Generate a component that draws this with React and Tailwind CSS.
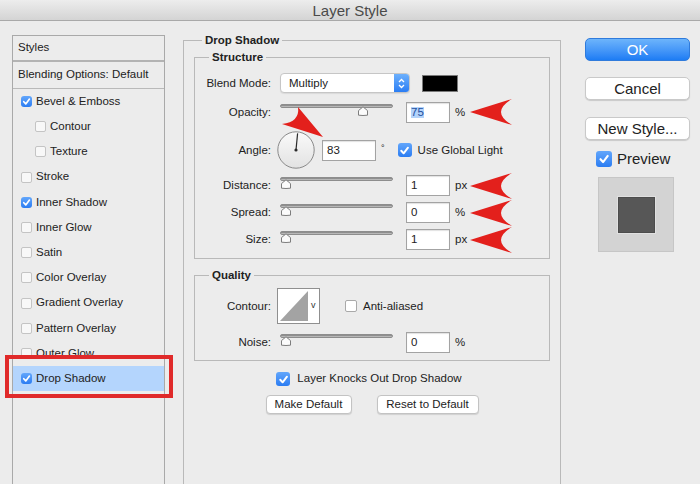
import React from "react";

function CheckMark({ s = 11 }) {
  return (
    <svg width={s} height={s} viewBox="0 0 12 12" className="block">
      <polyline points="3,6.2 5.2,8.6 9.2,3.4" fill="none" stroke="white" strokeWidth="1.8" strokeLinecap="round" strokeLinejoin="round" />
    </svg>
  );
}

function SmallBox({ checked }) {
  if (checked)
    return (
      <div className="w-[11px] h-[11px] rounded-[3px] bg-gradient-to-b from-[#62a6fb] to-[#2a7cf2] flex items-center justify-center shrink-0">
        <CheckMark s={11} />
      </div>
    );
  return <div className="w-[11px] h-[11px] rounded-[2px] bg-[#f8f8f8] border border-[#c4c4c4] shrink-0" />;
}

function MedBox({ checked }) {
  if (checked)
    return (
      <div className="w-[14px] h-[14px] rounded-[3px] bg-gradient-to-b from-[#62a6fb] to-[#2a7cf2] flex items-center justify-center shrink-0">
        <CheckMark s={13} />
      </div>
    );
  return <div className="w-[12px] h-[12px] rounded-[2px] bg-white border border-[#a9a9a9] shrink-0" />;
}

const items = [
  { t: "Bevel & Emboss", c: true },
  { t: "Contour", i: true },
  { t: "Texture", i: true },
  { t: "Stroke" },
  { t: "Inner Shadow", c: true },
  { t: "Inner Glow" },
  { t: "Satin" },
  { t: "Color Overlay" },
  { t: "Gradient Overlay" },
  { t: "Pattern Overlay" },
  { t: "Outer Glow" },
  { t: "Drop Shadow", c: true, sel: true },
];

function LeftPanel() {
  return (
    <div className="ml-[12px] mt-[14px] w-[153px] h-[460px] border-x border-t border-[#a9a9a9] text-[11.5px] shrink-0">
      <div className="h-[26px] flex items-center pl-[5px] border-b-2 border-[#b3b3b3]">Styles</div>
      <div className="h-[27px] flex items-center pl-[5px] border-b border-[#b9b9b9]">Blending Options: Default</div>
      {items.map((it) => (
        <div
          key={it.t}
          className={
            "h-[25.2px] flex items-center " +
            (it.i ? "pl-[22px] " : "pl-[8px] ") +
            (it.sel ? "bg-[#b4d5fd]" : "")
          }
        >
          <SmallBox checked={it.c} />
          <span className="ml-[4px] leading-none">{it.t}</span>
        </div>
      ))}
    </div>
  );
}

function Legend({ children }) {
  return (
    <div className="block w-fit -mt-[8px] px-[3px] bg-[#ececec] text-[11.5px] font-bold leading-[14px] ml-[14px]">
      {children}
    </div>
  );
}

function Label({ children }) {
  return <div className="w-[76px] text-right shrink-0 leading-none pt-[2px]">{children}</div>;
}

function Thumb({ cls }) {
  return (
    <svg className={"absolute top-[5px] " + cls} width="12" height="10" viewBox="0 0 12 10">
      <path d="M1.5,9.2 L1.5,4.6 L6,0.8 L10.5,4.6 L10.5,9.2 Q6,9.8 1.5,9.2 Z" fill="#fbfbfb" stroke="#7d7d7d" strokeWidth="1" strokeLinejoin="round" />
    </svg>
  );
}

function Slider({ thumbCls }) {
  return (
    <div className="relative w-[113px] h-[22px] ml-[9px] shrink-0">
      <div className="mt-[3px] h-[4px] rounded-full bg-gradient-to-b from-[#7b7b7b] to-[#cdcdcd] border border-[#8d8d8d]" />
      <Thumb cls={thumbCls} />
    </div>
  );
}

function Input({ children, w = "w-[44px]", ml = "ml-[13px]" }) {
  return (
    <div className={w + " " + ml + " h-[21px] bg-white border border-[#a3a3a3] shadow-[inset_0_1px_1px_rgba(0,0,0,0.12)] flex items-center pl-[4px] pt-[1px] shrink-0"}>
      {children}
    </div>
  );
}

function SliderRow({ label, value, unit, thumbCls, mt }) {
  return (
    <div className={"flex items-center h-[22px] " + mt}>
      <Label>{label}</Label>
      <Slider thumbCls={thumbCls} />
      <Input>{value}</Input>
      <span className="ml-[5px] leading-none pt-[2px]">{unit}</span>
    </div>
  );
}

function Dial() {
  return (
    <svg width="38" height="38" viewBox="0 0 38 38" className="ml-[6px] shrink-0">
      <defs>
        <linearGradient id="dg" x1="0" y1="0" x2="0" y2="1">
          <stop offset="0" stopColor="#fafafa" />
          <stop offset="1" stopColor="#e2e2e2" />
        </linearGradient>
      </defs>
      <circle cx="19" cy="19" r="18.2" fill="url(#dg)" stroke="#8a8a8a" strokeWidth="1" />
      <line x1="19" y1="19" x2="20.6" y2="2.4" stroke="#2a2a2a" strokeWidth="1.2" />
      <circle cx="19" cy="19" r="1.6" fill="#2a2a2a" />
    </svg>
  );
}

function ContourThumb() {
  return (
    <svg width="43" height="36" viewBox="0 0 43 36" className="ml-[6px] shrink-0">
      <rect x="0.5" y="0.5" width="42" height="35" fill="#ffffff" stroke="#8f8f8f" />
      <polygon points="3,33 31,3 31,33" fill="#a3a3a3" />
      <text x="34" y="20" fontSize="9" fill="#333" fontFamily="Liberation Sans, Arial, sans-serif">v</text>
    </svg>
  );
}

function Main() {
  return (
    <div className="ml-[18px] mt-[19px] w-[378px] h-[444px] border-x border-t border-[#b9b9b9] text-[11.5px] shrink-0">
      <div className="block w-fit -mt-[8px] px-[3px] bg-[#ececec] font-bold leading-[14px] ml-[18px]">Drop Shadow</div>

      {/* Structure */}
      <div className="ml-[10px] mt-[10px] w-[356px] border border-[#b9b9b9] pb-[8px]">
        <Legend>Structure</Legend>
        <div className="flex items-center h-[22px] mt-[8px]">
          <Label>Blend Mode:</Label>
          <div className="ml-[9px] w-[130px] h-[20px] rounded-[4px] border border-[#c6c6c6] bg-white flex items-center overflow-hidden shadow-[0_1px_1px_rgba(0,0,0,0.08)]">
            <span className="flex-1 pl-[8px] leading-none pt-[1px]">Multiply</span>
            <div className="w-[15px] h-full bg-gradient-to-b from-[#6cb0fc] to-[#2a7df4] flex items-center justify-center">
              <svg width="7" height="11" viewBox="0 0 7 11">
                <polyline points="1,4 3.5,1.5 6,4" fill="none" stroke="white" strokeWidth="1.3" />
                <polyline points="1,7 3.5,9.5 6,7" fill="none" stroke="white" strokeWidth="1.3" />
              </svg>
            </div>
          </div>
          <div className="ml-[12px] w-[36px] h-[17px] bg-black border border-[#7a7a7a]" />
        </div>

        <div className="flex items-center h-[22px] mt-[7px]">
          <Label>Opacity:</Label>
          <Slider thumbCls="left-[77px]" />
          <Input>
            <span className="bg-[#b3d3fa] text-[#1f4f9e] leading-none">75</span>
          </Input>
          <span className="ml-[5px] leading-none pt-[2px]">%</span>
        </div>

        <div className="flex items-center h-[38px] mt-[8px]">
          <Label>Angle:</Label>
          <Dial />
          <Input w="w-[54px]" ml="ml-[7px]">83</Input>
          <span className="ml-[5px] leading-none text-[9px] -mt-[4px]">°</span>
          <div className="ml-[13px]">
            <MedBox checked />
          </div>
          <span className="ml-[6px] leading-none pt-[1px]">Use Global Light</span>
        </div>

        <SliderRow label="Distance:" value="1" unit="px" thumbCls="left-0" mt="mt-[5px]" />
        <SliderRow label="Spread:" value="0" unit="%" thumbCls="left-0" mt="mt-[5px]" />
        <SliderRow label="Size:" value="1" unit="px" thumbCls="left-0" mt="mt-[5px]" />
      </div>

      {/* Quality */}
      <div className="ml-[10px] mt-[16px] w-[356px] border border-[#b9b9b9] pb-[7px]">
        <Legend>Quality</Legend>
        <div className="flex items-center h-[36px] mt-[6px]">
          <Label>Contour:</Label>
          <ContourThumb />
          <div className="ml-[25px]">
            <MedBox />
          </div>
          <span className="ml-[6px] leading-none pt-[1px]">Anti-aliased</span>
        </div>
        <SliderRow label="Noise:" value="0" unit="%" thumbCls="left-0" mt="mt-[7px]" />
      </div>

      <div className="flex items-center justify-center h-[14px] mt-[11px] -ml-[6px]">
        <MedBox checked />
        <span className="ml-[7px] leading-none">Layer Knocks Out Drop Shadow</span>
      </div>

      <div className="flex justify-center gap-[25px] mt-[9px]">
        <div className="w-[86px] h-[19px] bg-white border border-[#c3c3c3] rounded-[4px] shadow-[0_1px_1px_rgba(0,0,0,0.12)] flex items-center justify-center leading-none">Make Default</div>
        <div className="w-[102px] h-[19px] bg-white border border-[#c3c3c3] rounded-[4px] shadow-[0_1px_1px_rgba(0,0,0,0.12)] flex items-center justify-center leading-none">Reset to Default</div>
      </div>
    </div>
  );
}

function Right() {
  return (
    <div className="ml-[24px] mt-[17px] w-[105px] shrink-0 text-[15px]">
      <div className="h-[23px] rounded-[5px] bg-gradient-to-b from-[#6db4fb] to-[#1c7cf4] border border-[#2f7bdc] text-white flex items-center justify-center leading-none">OK</div>
      <div className="mt-[16px] h-[23px] rounded-[5px] bg-white border border-[#c9c9c9] shadow-[0_1px_1px_rgba(0,0,0,0.15)] flex items-center justify-center leading-none">Cancel</div>
      <div className="mt-[17px] h-[23px] rounded-[5px] bg-white border border-[#c9c9c9] shadow-[0_1px_1px_rgba(0,0,0,0.15)] flex items-center justify-center leading-none">New Style...</div>
      <div className="mt-[10px] ml-[11px] h-[17px] flex items-center">
        <div className="w-[16px] h-[16px] rounded-[3px] bg-gradient-to-b from-[#62a6fb] to-[#2a7cf2] flex items-center justify-center">
          <CheckMark s={14} />
        </div>
        <span className="ml-[5px] leading-none">Preview</span>
      </div>
      <div className="mt-[10px] ml-[13px] w-[76px] h-[75px] bg-[#d3d3d3] border border-[#c6c6c6] flex items-center justify-center">
        <div className="w-[37px] h-[36px] bg-[#575757] border border-[#4c4c4c] shadow-[0_0_0_1px_#e0e0e0]" />
      </div>
    </div>
  );
}

function arrowPath(y) {
  return `M470,${y} L512,${y - 13} Q490,${y} 512,${y + 13} Z`;
}

export default function App() {
  return (
    <div className="relative w-[700px] h-[484px] overflow-hidden bg-[#ececec] font-['Liberation_Sans',Arial,sans-serif] text-[#222]">
      <div className="h-[21px] border-b border-[#a9a9a9] bg-gradient-to-b from-[#ededed] to-[#d4d4d4] flex items-center justify-center text-[15px] text-[#4a4a4a] leading-none">
        Layer Style
      </div>
      <div className="flex">
        <LeftPanel />
        <Main />
        <Right />
      </div>

      <div className="absolute left-[5px] top-[355px] w-[168px] h-[43px] border-[4px] border-[#e02a2a]" />
      <svg className="absolute left-0 top-0 pointer-events-none" width="700" height="484" viewBox="0 0 700 484">
        <g fill="#e3201c">
          <path d={arrowPath(112)} />
          <path d={arrowPath(186)} />
          <path d={arrowPath(213)} />
          <path d={arrowPath(240)} />
          <path d="M323,137 L298,107 Q300,122 282,124 Z" />
        </g>
      </svg>
    </div>
  );
}
